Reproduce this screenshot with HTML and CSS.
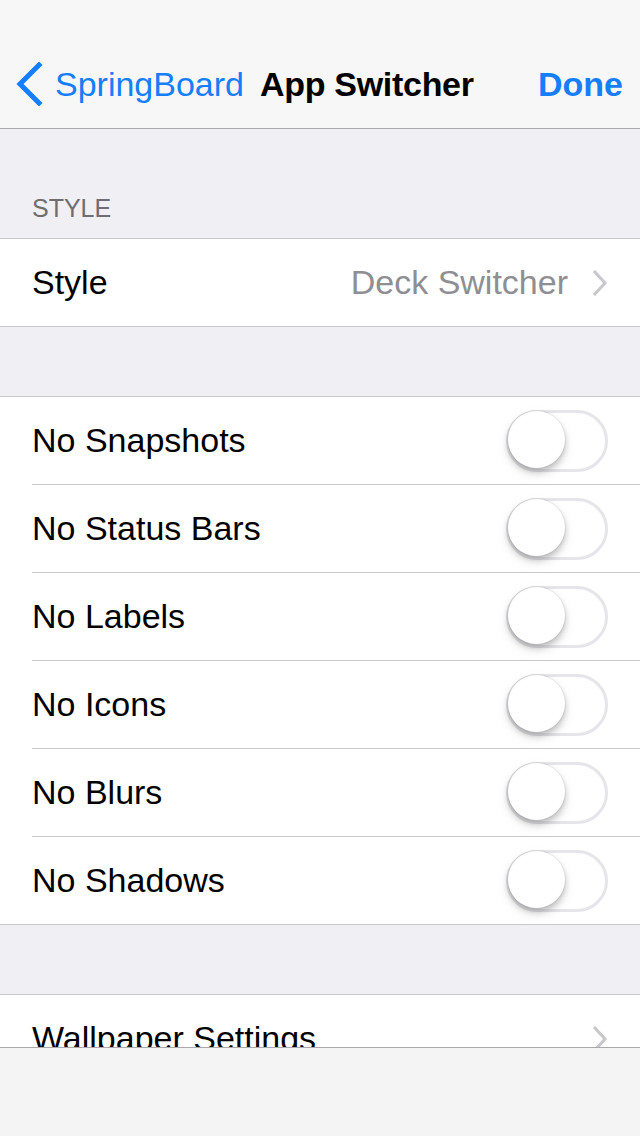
FILE: index.html
```html
<!DOCTYPE html>
<html>
<head>
<meta charset="utf-8">
<link rel="stylesheet" href="styles.css">
</head>
<body>
<header class="navbar">
  <a class="back">
    <svg class="back-chevron" width="28" height="44" viewBox="0 0 28 44"><path d="M24 3 L5 22 L24 41" fill="none" stroke="#157efb" stroke-width="5" stroke-linecap="square" stroke-linejoin="miter"/></svg>
    <span class="back-label">SpringBoard</span>
  </a>
  <div class="title">App Switcher</div>
  <a class="done">Done</a>
</header>

<div class="section-header">STYLE</div>
<div class="group">
  <div class="row">
    <span class="label">Style</span>
    <span class="detail">Deck Switcher</span>
    <svg class="chevron" width="16" height="28" viewBox="0 0 16 28"><path d="M2 2 L13 14 L2 26" fill="none" stroke="#c7c7cc" stroke-width="3"/></svg>
  </div>
</div>

<div class="spacer"></div>
<div class="group">
  <div class="row"><span class="label">No Snapshots</span><span class="switch"><span class="knob"></span></span></div>
  <div class="row"><span class="label">No Status Bars</span><span class="switch"><span class="knob"></span></span></div>
  <div class="row"><span class="label">No Labels</span><span class="switch"><span class="knob"></span></span></div>
  <div class="row"><span class="label">No Icons</span><span class="switch"><span class="knob"></span></span></div>
  <div class="row"><span class="label">No Blurs</span><span class="switch"><span class="knob"></span></span></div>
  <div class="row"><span class="label">No Shadows</span><span class="switch"><span class="knob"></span></span></div>
</div>

<div class="spacer"></div>
<div class="group">
  <div class="row">
    <span class="label">Wallpaper Settings</span>
    <svg class="chevron" width="16" height="28" viewBox="0 0 16 28"><path d="M2 2 L13 14 L2 26" fill="none" stroke="#c7c7cc" stroke-width="3"/></svg>
  </div>
</div>

<footer class="toolbar"></footer>
</body>
</html>
```

FILE: styles.css
```css
html, body {
  margin: 0;
  padding: 0;
}
body {
  background: #efeff4;
  font-family: "Liberation Sans", Arial, sans-serif;
  width: 640px;
  height: 1136px;
  overflow: hidden;
  -webkit-font-smoothing: antialiased;
}
.navbar {
  height: 88px;
  padding-top: 40px;
  background: #f7f7f7;
  border-bottom: 1px solid #a9a9ad;
  display: flex;
  align-items: center;
  position: relative;
}
.back {
  display: flex;
  align-items: center;
  padding-left: 15px;
  color: #157efb;
  font-size: 34px;
}
.back-chevron {
  display: block;
  margin-right: 12px;
}
.title {
  position: absolute;
  left: 260px;
  top: 40px;
  height: 88px;
  line-height: 88px;
  font-size: 34px;
  font-weight: bold;
  color: #000;
  letter-spacing: -0.3px;
}
.done {
  margin-left: auto;
  padding-right: 17px;
  color: #157efb;
  font-size: 34px;
  font-weight: bold;
}
.section-header {
  height: 109px;
  box-sizing: border-box;
  padding: 0 32px 15px;
  display: flex;
  align-items: flex-end;
  font-size: 25px;
  color: #6d6d72;
}
.spacer {
  height: 69px;
}
.group {
  background: #fff;
  border-top: 1px solid #c8c7cc;
  border-bottom: 1px solid #c8c7cc;
  padding-left: 32px;
}
.row {
  height: 87px;
  display: flex;
  align-items: center;
  padding-right: 32px;
  border-bottom: 1px solid #c8c7cc;
}
.row:last-child {
  border-bottom: none;
}
.label {
  font-size: 34px;
  color: #000;
  flex: 1;
}
.detail {
  font-size: 34px;
  color: #8e8e93;
  margin-right: 24px;
}
.chevron {
  display: block;
}
.switch {
  position: relative;
  width: 102px;
  height: 62px;
  box-sizing: border-box;
  border: 3px solid #e5e5ea;
  border-radius: 31px;
  background: #fff;
}
.knob {
  position: absolute;
  left: -1px;
  top: -2px;
  width: 57px;
  height: 57px;
  border-radius: 50%;
  background: #fff;
  box-shadow: 0 0 0 1px rgba(0,0,0,0.06), 0 4px 6px rgba(0,0,0,0.22), 0 6px 14px rgba(0,0,0,0.08);
}
.toolbar {
  position: fixed;
  left: 0;
  right: 0;
  bottom: 0;
  height: 88px;
  background: #f4f4f4;
  border-top: 1px solid #a9a9ad;
}
```
